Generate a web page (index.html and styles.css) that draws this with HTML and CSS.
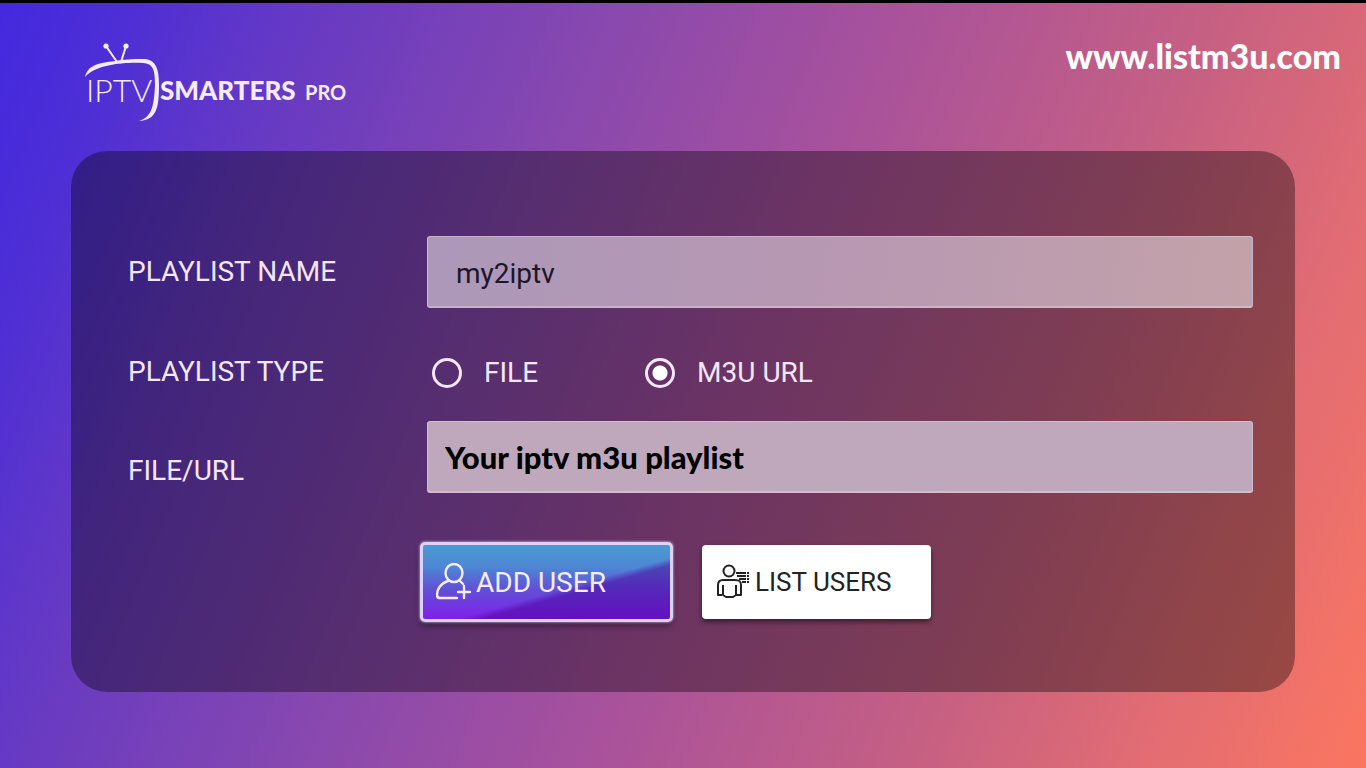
FILE: index.html
```html
<!DOCTYPE html>
<html lang="en">
<head>
<meta charset="utf-8">
<title>IPTV Smarters Pro</title>
<link rel="stylesheet" href="styles.css">
</head>
<body class="page">
<header class="header">
  <svg class="logo" viewBox="0 0 264 84" role="img" aria-label="IPTV Smarters Pro">
    <g fill="none" stroke="#f6eaff" stroke-linecap="round">
      <path d="M21 6 L32 22 M41 6 L36 22" stroke-width="2"/>
    </g>
    <g fill="#f6eaff">
      <circle cx="21" cy="6" r="2.6"/>
      <circle cx="41" cy="6" r="2.6"/>
      <path d="M0 37 C3 25 13 23 30 21 C43 19 52 19 60 19 C71 20 74 29 74 45 C74 67 72 80 54 81 C66 77 69 68 70 45 C70 29 68 24 58 23 C42 22 11 24 0 37 Z"/>
      <text class="logo-thin" x="1" y="62">IPTV</text>
      <text class="logo-bold" x="75" y="60">SMARTERS</text>
      <text class="logo-small" x="220" y="60">PRO</text>
    </g>
  </svg>
  <a class="site-link" href="#">www.listm3u.com</a>
</header>
<main class="panel">
  <form class="form">
    <label class="label" for="name">PLAYLIST NAME</label>
    <input class="field" id="name" type="text" value="my2iptv">

    <span class="label label-type" id="type-label">PLAYLIST TYPE</span>
    <div class="choices" role="radiogroup" aria-labelledby="type-label">
      <label class="choice"><input class="radio" type="radio" name="type">FILE</label>
      <label class="choice"><input class="radio" type="radio" name="type" checked>M3U URL</label>
    </div>

    <label class="label label-low" for="url">FILE/URL</label>
    <input class="field field-url" id="url" type="text" value="Your iptv m3u playlist">

    <div class="actions">
      <button class="button button-add" type="button">
        <svg class="icon" viewBox="0 0 36 38" fill="none" stroke="currentColor" stroke-width="2.4" stroke-linecap="round" stroke-linejoin="round">
          <ellipse cx="18" cy="10" rx="8.5" ry="9"/>
          <path d="M12 18 C5 20 1 26 1 32 C1 34 2 35 4 35 H21 M24 18 L27 21 M28 23 V35 M22 29 H34"/>
        </svg>
        ADD USER
      </button>
      <button class="button button-list" type="button">
        <svg class="icon" viewBox="0 0 36 38" fill="none" stroke="currentColor" stroke-width="2" stroke-linejoin="round">
          <circle cx="14" cy="8" r="5.5"/>
          <path d="M7 32 H3 V22 C3 18 5 17 8 17 H20 C24 17 26 18 26 22 V32 H21 M8 22 V32 L11 34 H18 L21 32 V22"/>
          <path d="M21 10 H31 M22 13 H31 M24 16 H31 M27 19 H31" stroke-width="2"/>
          <path d="M32 10 H34 M32 13 H34 M32 16 H34 M32 19 H34"/>
        </svg>
        LIST USERS
      </button>
    </div>
  </form>
</main>
</body>
</html>
```
FILE: styles.css
```css
* { box-sizing: border-box; }

.page {
  margin: 0;
  min-height: 100vh;
  padding-bottom: 76px;
  border-top: 3px solid #000;
  display: flex;
  flex-direction: column;
  font-family: Roboto, "Liberation Sans", sans-serif;
  color: #f5e6fa;
  background: linear-gradient(112deg, #4329df 0%, #4e2fd5 8%, #693bc1 20%, #8748af 36%, #a9529b 54%, #c86181 74%, #e36d72 87%, #fb7660 100%);
}

.header {
  display: flex;
  justify-content: space-between;
  align-items: flex-start;
  height: 148px;
  padding: 37px 25px 0 85px;
}

.logo { width: 264px; height: 84px; }
.logo-thin { font: 300 32px Lato, sans-serif; }
.logo-bold { font: 900 26px Lato, sans-serif; }
.logo-small { font: 700 20px Lato, sans-serif; }

.site-link {
  font: 900 34px/32px Lato, sans-serif;
  color: #fff;
  text-decoration: none;
}

.panel {
  flex: 1;
  margin: 0 71px;
  padding: 85px 42px 69px 57px;
  border-radius: 36px;
  background: rgba(0, 0, 0, 0.36);
}

.form {
  display: grid;
  grid-template-columns: 299px 1fr;
  grid-template-rows: 72px 113px 72px;
  align-items: center;
}

.label { font-size: 28px; line-height: 32px; }
.label-type { padding-top: 14px; }
.label-low { padding-top: 28px; }

.field {
  width: 100%;
  height: 72px;
  padding: 4px 28px 0;
  border: 1px solid rgba(255, 235, 250, 0.3);
  border-bottom-width: 2px;
  border-radius: 3px;
  background: linear-gradient(100deg, #ac98b9, #b898b2 50%, #c3a2a9);
  color: #21152a;
  font: 28px Roboto, sans-serif;
}

.field-url {
  padding: 0 17px;
  background: #bfa8bc;
  color: #000;
  font: 900 31px Lato, sans-serif;
}

.choices {
  display: flex;
  gap: 107px;
  padding: 16px 0 0 5px;
}

.choice {
  display: flex;
  align-items: center;
  gap: 22px;
  font-size: 28px;
  line-height: 32px;
}

.radio {
  appearance: none;
  width: 30px;
  height: 30px;
  margin: 0;
  border: 3px solid #f5e6fa;
  border-radius: 50%;
}

.radio:checked { background: radial-gradient(circle, #fff 7px, transparent 8px); }

.actions {
  grid-column: 2;
  display: flex;
  align-items: center;
  gap: 29px;
  margin: 49px 0 0 -7px;
}

.button {
  display: flex;
  align-items: center;
  gap: 4px;
  font: 26px Roboto, sans-serif;
}

.icon { width: 36px; height: 38px; }

.button-add {
  width: 253px;
  height: 80px;
  padding: 0 13px;
  border: 3px solid #dcd2f8;
  border-radius: 5px;
  color: #f5edff;
  font-size: 28px;
  background:
    linear-gradient(164deg, transparent 58%, rgba(72, 0, 155, 0.5) 63%),
    linear-gradient(180deg, #4b9ad4 0%, #4e86d4 30%, #6150d6 60%, #8020ea 100%);
  box-shadow: 0 0 3px #dcd2f8, 0 4px 6px rgba(0, 0, 0, 0.4);
}

.button-list {
  width: 229px;
  height: 74px;
  padding: 0 13px;
  border: 0;
  border-radius: 4px;
  color: #222;
  background: #fff;
  box-shadow: 0 3px 5px rgba(0, 0, 0, 0.5);
}
```
